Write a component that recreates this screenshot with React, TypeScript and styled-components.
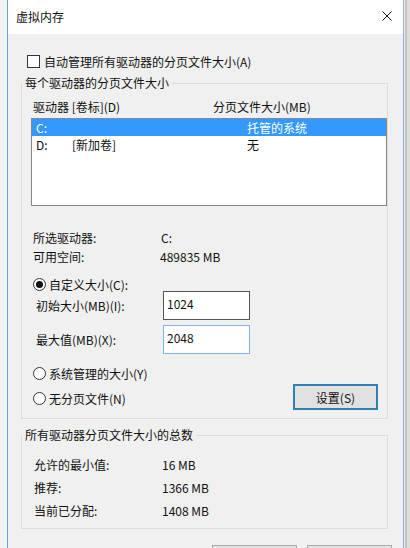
import React from 'react';
import styled, { createGlobalStyle } from 'styled-components';

const GlobalStyle = createGlobalStyle`
  html, body {
    margin: 0;
    padding: 0;
    background: #e9e9e9;
  }
  body {
    font-family: "Noto Sans CJK SC", "Microsoft YaHei", sans-serif;
    font-size: 12px;
    color: #111;
  }
`;

const Page = styled.div`
  display: flex;
  height: 548px;
  overflow: hidden;
`;

const BehindLeft = styled.div`
  width: 7px;
  flex-shrink: 0;
  background: #f3f3f3;
`;

const BehindRight = styled.div`
  flex: 1;
  background: #dcdcdc;
  border-left: 2px solid #c4c4c4;
  margin-left: 1px;
`;

const Dialog = styled.div`
  width: 395px;
  flex-shrink: 0;
  display: flex;
  flex-direction: column;
  background: #f0f0f0;
  border-left: 1px solid #6f9fd2;
  border-right: 1px solid #8fb2d8;
`;

const TitleBar = styled.div`
  height: 32px;
  flex-shrink: 0;
  display: flex;
  align-items: center;
  justify-content: space-between;
  background: #fff;
  padding: 0 11px 2px 8px;
  font-size: 12px;
`;

const CloseBtn = styled.div`
  display: flex;
  width: 10px;
  height: 10px;
`;

const Content = styled.div`
  display: flex;
  flex-direction: column;
  padding: 0 15px 0 0;
`;

const CheckRow = styled.label`
  display: flex;
  align-items: center;
  height: 18px;
  margin: 18px 0 0 19px;
  gap: 4px;
`;

const CheckBox = styled.span`
  width: 11px;
  height: 11px;
  border: 1px solid #333;
  background: #fff;
`;

const Group = styled.fieldset<{ $top: number }>`
  margin: ${p => p.$top}px 0 0 13px;
  padding: 0;
  min-width: 0;
  border: 1px solid #dcdcdc;
`;

const Legend = styled.legend`
  padding: 0 3px;
  line-height: 18px;
  font-size: 12px;
`;

const GroupBody = styled.div<{ $pad: string }>`
  display: flex;
  flex-direction: column;
  padding: ${p => p.$pad};
`;

const ColumnHeader = styled.div`
  display: grid;
  grid-template-columns: 180px 1fr;
  height: 18px;
  align-items: center;
  padding-left: 2px;
`;

const ListBox = styled.div`
  margin-top: 3px;
  height: 86px;
  border: 1px solid #828790;
  background: #fff;
  display: flex;
  flex-direction: column;
`;

const ListRow = styled.div<{ $selected?: boolean }>`
  display: grid;
  grid-template-columns: 36px 175px 1fr;
  height: 17px;
  align-items: center;
  padding-left: 4px;
  background: ${p => (p.$selected ? '#3399ff' : 'transparent')};
  color: ${p => (p.$selected ? '#fff' : '#111')};
`;

const InfoRow = styled.div<{ $top: number; $label: number }>`
  display: grid;
  grid-template-columns: ${p => p.$label}px 1fr;
  height: 18px;
  align-items: center;
  margin-top: ${p => p.$top}px;
`;

const RadioRow = styled.label<{ $top: number }>`
  display: flex;
  align-items: center;
  gap: 3px;
  height: 18px;
  margin-top: ${p => p.$top}px;
`;

const RadioCircle = styled.span<{ $checked?: boolean }>`
  width: 11px;
  height: 11px;
  border: 1px solid #333;
  border-radius: 50%;
  background: #fff;
  display: flex;
  align-items: center;
  justify-content: center;

  &::after {
    content: '';
    display: ${p => (p.$checked ? 'block' : 'none')};
    width: 7px;
    height: 7px;
    border-radius: 50%;
    background: #111;
  }
`;

const SizeRow = styled.div<{ $top: number }>`
  display: grid;
  grid-template-columns: 127px 87px;
  align-items: center;
  margin-top: ${p => p.$top}px;
  padding-left: 5px;
`;

const TextBox = styled.input<{ $focused?: boolean }>`
  box-sizing: border-box;
  width: 87px;
  height: 29px;
  padding: 0 3px 5px;
  border: 1px solid ${p => (p.$focused ? '#7eb4ea' : '#555')};
  background: #fff;
  font-family: inherit;
  font-size: 12px;
  color: #111;
  outline: none;
`;

const ChoiceArea = styled.div`
  display: flex;
  justify-content: space-between;
  align-items: flex-start;
  margin-top: 10px;
`;

const RadioColumn = styled.div`
  display: flex;
  flex-direction: column;
  padding-left: 2px;
`;

const SetButton = styled.button`
  box-sizing: border-box;
  width: 85px;
  height: 26px;
  margin: 20px 9px 0 0;
  background: #e1e1e1;
  border: 2px solid #327fb3;
  font-family: inherit;
  font-size: 12px;
  color: #111;
  padding: 0;
`;

const ButtonBar = styled.div`
  display: flex;
  justify-content: flex-end;
  gap: 10px;
  margin: 16px -4px 0 0;
`;

const DialogButton = styled.button`
  box-sizing: border-box;
  width: 85px;
  height: 23px;
  background: #e1e1e1;
  border: 1px solid #adadad;
  padding: 0;
`;

const App: React.FC = () => {
  return (
    <>
      <GlobalStyle />
      <Page>
        <BehindLeft />
        <Dialog>
          <TitleBar>
            <span>虚拟内存</span>
            <CloseBtn>
              <svg width="10" height="10" viewBox="0 0 10 10">
                <path d="M0.5 0.5 L9.5 9.5 M9.5 0.5 L0.5 9.5" stroke="#111" strokeWidth="1" />
              </svg>
            </CloseBtn>
          </TitleBar>
          <Content>
            <CheckRow>
              <CheckBox />
              <span>自动管理所有驱动器的分页文件大小(A)</span>
            </CheckRow>

            <Group $top={4}>
              <Legend>每个驱动器的分页文件大小</Legend>
              <GroupBody $pad="5px 0 8px 9px">
                <ColumnHeader>
                  <span>驱动器 [卷标](D)</span>
                  <span>分页文件大小(MB)</span>
                </ColumnHeader>
                <ListBox>
                  <ListRow $selected>
                    <span>C:</span>
                    <span></span>
                    <span>托管的系统</span>
                  </ListRow>
                  <ListRow>
                    <span>D:</span>
                    <span>[新加卷]</span>
                    <span>无</span>
                  </ListRow>
                </ListBox>

                <InfoRow $top={22} $label={130}>
                  <span style={{ paddingLeft: 2 }}>所选驱动器:</span>
                  <span>C:</span>
                </InfoRow>
                <InfoRow $top={1} $label={129}>
                  <span style={{ paddingLeft: 2 }}>可用空间:</span>
                  <span>489835 MB</span>
                </InfoRow>

                <RadioColumn>
                  <RadioRow $top={10}>
                    <RadioCircle $checked />
                    <span>自定义大小(C):</span>
                  </RadioRow>
                </RadioColumn>
                <SizeRow $top={-2}>
                  <span>初始大小(MB)(I):</span>
                  <TextBox defaultValue="1024" />
                </SizeRow>
                <SizeRow $top={5}>
                  <span>最大值(MB)(X):</span>
                  <TextBox $focused defaultValue="2048" />
                </SizeRow>

                <ChoiceArea>
                  <RadioColumn>
                    <RadioRow $top={0}>
                      <RadioCircle />
                      <span>系统管理的大小(Y)</span>
                    </RadioRow>
                    <RadioRow $top={7}>
                      <RadioCircle />
                      <span>无分页文件(N)</span>
                    </RadioRow>
                  </RadioColumn>
                  <SetButton>设置(S)</SetButton>
                </ChoiceArea>
              </GroupBody>
            </Group>

            <Group $top={7}>
              <Legend>所有驱动器分页文件大小的总数</Legend>
              <GroupBody $pad="11px 0 9px 12px">
                <InfoRow $top={0} $label={128}>
                  <span>允许的最小值:</span>
                  <span>16 MB</span>
                </InfoRow>
                <InfoRow $top={5} $label={128}>
                  <span>推荐:</span>
                  <span>1366 MB</span>
                </InfoRow>
                <InfoRow $top={5} $label={128}>
                  <span>当前已分配:</span>
                  <span>1408 MB</span>
                </InfoRow>
              </GroupBody>
            </Group>

            <ButtonBar>
              <DialogButton aria-label="确定" />
              <DialogButton aria-label="取消" />
            </ButtonBar>
          </Content>
        </Dialog>
        <BehindRight />
      </Page>
    </>
  );
};

export default App;
